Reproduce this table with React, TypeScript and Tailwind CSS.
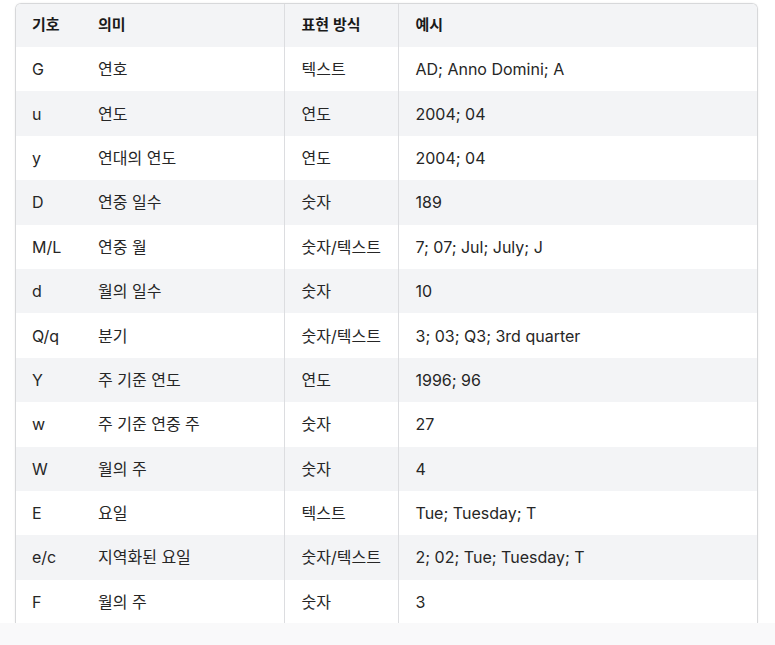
const rows: [string, string, string, string][] = [
  ['G', '연호', '텍스트', 'AD; Anno Domini; A'],
  ['u', '연도', '연도', '2004; 04'],
  ['y', '연대의 연도', '연도', '2004; 04'],
  ['D', '연중 일수', '숫자', '189'],
  ['M/L', '연중 월', '숫자/텍스트', '7; 07; Jul; July; J'],
  ['d', '월의 일수', '숫자', '10'],
  ['Q/q', '분기', '숫자/텍스트', '3; 03; Q3; 3rd quarter'],
  ['Y', '주 기준 연도', '연도', '1996; 96'],
  ['w', '주 기준 연중 주', '숫자', '27'],
  ['W', '월의 주', '숫자', '4'],
  ['E', '요일', '텍스트', 'Tue; Tuesday; T'],
  ['e/c', '지역화된 요일', '숫자/텍스트', '2; 02; Tue; Tuesday; T'],
  ['F', '월의 주', '숫자', '3'],
];

export default function App() {
  return (
    <div
      className="w-[775px] h-[645px] bg-white flex flex-col overflow-hidden"
      style={{ fontFamily: 'Inter, "Noto Sans CJK KR", sans-serif' }}
    >
      <div className="bg-white pt-[3px] pl-[15px] pr-[17px] flex-1 min-h-0 flex flex-col">
        {/* Table */}
        <div className="h-[620px] overflow-hidden rounded-t-md border-x border-t border-[#d7d8da] shadow-[0_0_2px_rgba(0,0,0,0.08)]">
          <table className="w-full table-fixed border-collapse text-[16px] text-[#262626]">
            <thead className="bg-[#f3f4f6]">
              <tr className="h-[43px] text-[15px]">
                <th className="w-[66px] pl-4 pr-0 text-left font-semibold text-[#1a1a1a]">기호</th>
                <th className="w-[202px] pl-4 text-left font-semibold text-[#1a1a1a]">의미</th>
                <th className="w-[114px] pl-[17px] text-left font-semibold text-[#1a1a1a] border-l border-[#dcdde0]">표현 방식</th>
                <th className="pl-[17px] text-left font-semibold text-[#1a1a1a] border-l border-[#dcdde0]">예시</th>
              </tr>
            </thead>
            <tbody>
              {rows.map((r, i) => (
                <tr key={i} className={`h-[44.4px] ${i % 2 === 1 ? 'bg-[#f3f4f6]' : 'bg-white'}`}>
                  <td className="pl-4 whitespace-nowrap">{r[0]}</td>
                  <td className="pl-4 whitespace-nowrap">{r[1]}</td>
                  <td className="pl-[17px] whitespace-nowrap border-l border-[#dcdde0]">{r[2]}</td>
                  <td className="pl-[17px] whitespace-nowrap border-l border-[#dcdde0]">{r[3]}</td>
                </tr>
              ))}
            </tbody>
          </table>
        </div>
      </div>
      <div className="h-[22px] shrink-0 bg-[#f9f9fa]" />
    </div>
  );
}
